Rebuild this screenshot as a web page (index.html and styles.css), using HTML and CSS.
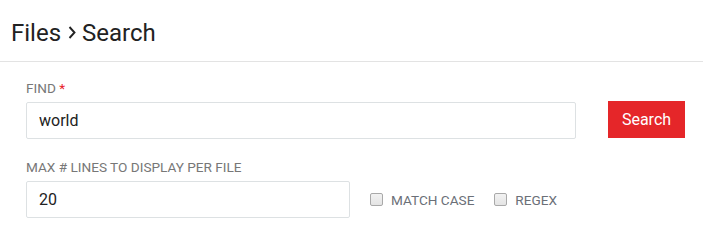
FILE: index.html
```html
<!DOCTYPE html>
<html>
<head>
<meta charset="utf-8">
<link rel="stylesheet" href="styles.css">
</head>
<body>
<header class="page-header">
  <h1 class="title">Files<svg class="sep" width="8" height="13" viewBox="0 0 8 13"><path d="M1.5 1 L6.5 6.5 L1.5 12" fill="none" stroke="#222" stroke-width="1.9"/></svg>Search</h1>
</header>
<form class="search-form">
  <div class="row row-find">
    <div class="field field-find">
      <label class="label">FIND <span class="req">*</span></label>
      <input class="input" type="text" value="world">
    </div>
    <button type="button" class="btn">Search</button>
  </div>
  <div class="row row-max">
    <div class="field field-max">
      <label class="label">MAX # LINES TO DISPLAY PER FILE</label>
      <input class="input" type="text" value="20">
    </div>
    <div class="checks">
      <label class="check"><span class="box"></span>MATCH CASE</label>
      <label class="check"><span class="box"></span>REGEX</label>
    </div>
  </div>
</form>
</body>
</html>
```
FILE: styles.css
```css
html, body {
  margin: 0;
  padding: 0;
  background: #fff;
  font-family: Roboto, "Noto Sans", sans-serif;
  color: #222;
}
.page-header {
  height: 62px;
  border-bottom: 1px solid #e3e3e3;
  padding-left: 11px;
  padding-top: 21px;
  box-sizing: border-box;
}
.title {
  margin: 0;
  font-size: 24px;
  font-weight: 400;
  color: #222;
  line-height: 24px;
}
.sep {
  margin: 0 6px 0 7px;
  vertical-align: 2px;
}
.search-form {
  padding-left: 26px;
  padding-top: 18px;
}
.row {
  display: flex;
  align-items: flex-end;
}
.row-max {
  margin-top: 20px;
}
.field {
  display: flex;
  flex-direction: column;
}
.field-find { width: 550px; }
.field-max { width: 324px; }
.label {
  font-size: 13.6px;
  color: #777;
  line-height: 16px;
  margin-bottom: 6px;
}
.req { color: #e8202a; }
.input {
  height: 37px;
  box-sizing: border-box;
  border: 1px solid #dde1e3;
  border-radius: 2px;
  padding: 0 12px;
  font-family: Roboto, sans-serif;
  font-size: 16px;
  color: #222;
  outline: none;
  margin: 0;
}
.btn {
  margin-left: 32px;
  margin-bottom: 1px;
  width: 77px;
  height: 37px;
  border: none;
  background: #e52629;
  color: #fff;
  font-family: Roboto, sans-serif;
  font-size: 16px;
  padding: 0;
}
.checks {
  display: flex;
  align-items: center;
  height: 37px;
  margin-left: 20px;
  gap: 20px;
}
.check {
  display: flex;
  align-items: center;
  font-size: 13.6px;
  color: #6b7078;
}
.box {
  width: 11px;
  height: 11px;
  border: 1px solid #a9a9a9;
  border-radius: 2px;
  background: linear-gradient(#f2f2f2, #e4e4e4);
  margin-right: 8px;
}
```
